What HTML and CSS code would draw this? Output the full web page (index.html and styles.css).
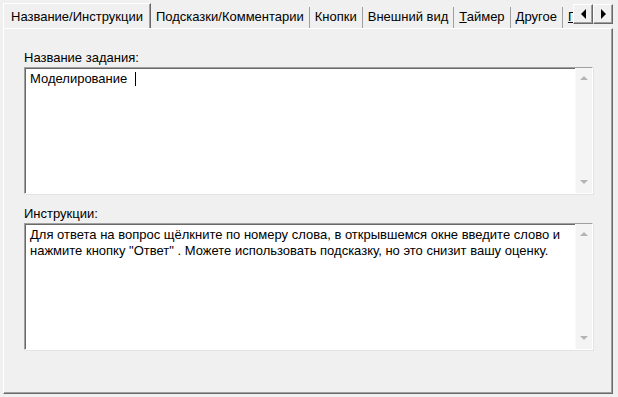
FILE: index.html
```html
<!DOCTYPE html>
<html lang="ru">
<head>
  <meta charset="UTF-8">
  <title>Название/Инструкции</title>
  <link rel="stylesheet" href="styles.css">
</head>
<body>
  <div class="window">
    <div class="tabs">
      <div class="tab active">Название/Инструкции</div>
      <div class="tab">Подсказки/Комментарии</div>
      <div class="tab">Кнопки</div>
      <div class="tab">Внешний вид</div>
      <div class="tab"><u>Т</u>аймер</div>
      <div class="tab">Другое</div>
      <div class="tab"><u>П</u>ечать</div>
      <div class="tab-scroll">
        <button class="scroll-btn"><span class="arrow-left"></span></button>
        <button class="scroll-btn"><span class="arrow-right"></span></button>
      </div>
    </div>
    <div class="panel">
      <label class="field-label">Название задания:</label>
      <div class="textbox">
        <div class="textbox-text">Моделирование <span class="caret"></span></div>
        <div class="scrollbar">
          <span class="sb-up"></span>
          <span class="sb-down"></span>
        </div>
      </div>
      <label class="field-label">Инструкции:</label>
      <div class="textbox">
        <div class="textbox-text">Для ответа на вопрос щёлкните по номеру слова, в открывшемся окне введите слово и<br>нажмите кнопку "Ответ" . Можете использовать подсказку, но это снизит вашу оценку.</div>
        <div class="scrollbar">
          <span class="sb-up"></span>
          <span class="sb-down"></span>
        </div>
      </div>
    </div>
  </div>
</body>
</html>
```

FILE: styles.css
```css
/* общий вид */
body {
  margin: 0;
  background: #f0f0f0;
  font-family: "Liberation Sans", Arial, sans-serif;
  font-size: 13px;
  color: #000;
}

.window {
  width: 618px;
  height: 397px;
  padding: 3px 0 0 3px;
  box-sizing: border-box;
}

/* вкладки */
.tabs {
  position: relative;
  display: flex;
  align-items: flex-end;
  height: 25px;
  width: 610px;
  overflow: hidden;
}

.tab {
  height: 21px;
  line-height: 20px;
  padding: 0 5px 0 5px;
  white-space: nowrap;
  border-right: 1px solid #a0a0a0;
  box-sizing: border-box;
}

.tab.active {
  height: 25px;
  line-height: 25px;
  padding: 0 7px 0 7px;
  border-left: 1px solid #fff;
  border-top: 1px solid #fff;
  border-right: 1px solid #696969;
  box-shadow: inset -1px 0 #a0a0a0;
}

.tab-scroll {
  position: absolute;
  right: 0;
  top: 1px;
  display: flex;
  background: #f0f0f0;
}

.scroll-btn {
  width: 20px;
  height: 20px;
  padding: 0;
  margin: 0;
  background: #f0f0f0;
  border: 1px solid;
  border-color: #fff #696969 #696969 #fff;
  box-shadow: inset -1px -1px #a0a0a0;
  display: flex;
  align-items: center;
  justify-content: center;
}

.arrow-left {
  width: 0;
  height: 0;
  border-top: 5px solid transparent;
  border-bottom: 5px solid transparent;
  border-right: 5px solid #000;
}

.arrow-right {
  width: 0;
  height: 0;
  border-top: 5px solid transparent;
  border-bottom: 5px solid transparent;
  border-left: 5px solid #000;
}

/* панель */
.panel {
  width: 610px;
  height: 366px;
  box-sizing: border-box;
  border: 1px solid;
  border-color: #fff #696969 #696969 #fff;
  box-shadow: inset -1px -1px #a0a0a0;
  padding: 22px 0 0 20px;
  display: flex;
  flex-direction: column;
}

.field-label {
  display: block;
  line-height: 14px;
  margin-bottom: 2px;
}

.textbox {
  display: flex;
  width: 569px;
  height: 127px;
  box-sizing: border-box;
  background: #fff;
  border: 1px solid;
  border-color: #a0a0a0 #fff #fff #a0a0a0;
  box-shadow: inset 1px 1px #696969, 1px 1px #e3e3e3;
  margin-bottom: 13px;
}

.textbox-text {
  flex: 1;
  padding: 3px 0 0 5px;
  line-height: 16px;
  white-space: nowrap;
  overflow: hidden;
}

.caret {
  display: inline-block;
  width: 1px;
  height: 14px;
  background: #000;
  vertical-align: -3px;
  margin-left: 4px;
}

/* полоса прокрутки */
.scrollbar {
  width: 17px;
  background: #f4f4f4;
  border-left: 1px solid #fafafa;
  display: flex;
  flex-direction: column;
  justify-content: space-between;
  align-items: center;
  padding: 8px 0 9px;
  box-sizing: border-box;
}

.sb-up {
  width: 0;
  height: 0;
  border-left: 4px solid transparent;
  border-right: 4px solid transparent;
  border-bottom: 4px solid #b4b4b4;
}

.sb-down {
  width: 0;
  height: 0;
  border-left: 4px solid transparent;
  border-right: 4px solid transparent;
  border-top: 4px solid #b4b4b4;
}
```
